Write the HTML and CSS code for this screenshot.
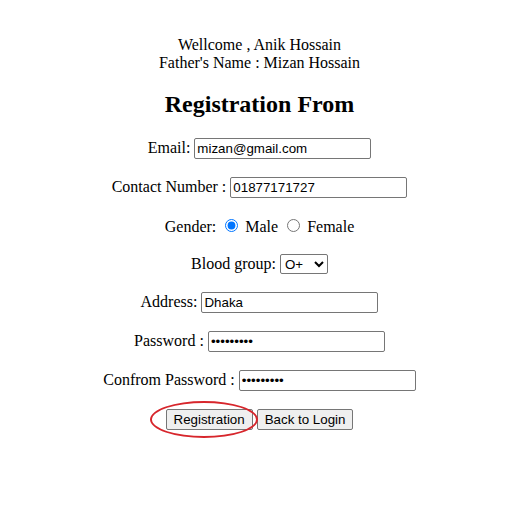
FILE: index.html
```html
<!DOCTYPE html>
<html>
<head>
<meta charset="utf-8">
<link rel="stylesheet" href="styles.css">
</head>
<body>
<div class="page">
  <p class="greet">Wellcome , Anik Hossain<br>Father's Name : Mizan Hossain</p>
  <h2 class="title">Registration From</h2>
  <form class="form">
    <p class="row">Email: <input class="field" type="text" value="mizan@gmail.com"></p>
    <p class="row">Contact Number : <input class="field" type="text" value="01877171727"></p>
    <p class="row">Gender: <input class="radio" type="radio" name="g" checked> Male <input class="radio" type="radio" name="g"> Female</p>
    <p class="row">Blood group: <select class="select"><option>O+</option><option>A+</option></select></p>
    <p class="row">Address: <input class="field" type="text" value="Dhaka"></p>
    <p class="row">Password : <input class="field" type="password" value="123456789"></p>
    <p class="row">Confrom Password : <input class="field" type="password" value="123456789"></p>
    <p class="row buttons"><span class="marked"><button class="btn" type="button">Registration</button></span> <button class="btn" type="button">Back to Login</button></p>
  </form>
</div>
</body>
</html>
```
FILE: styles.css
```css
html, body {
  margin: 0;
  background: #ffffff;
}
body {
  padding: 8px;
  font-family: "Liberation Serif", "Times New Roman", serif;
  font-size: 16px;
  color: #000;
}
.page {
  text-align: center;
  padding-top: 12px;
}
.greet {
  margin: 16px 0;
}
.title {
  font-size: 24px;
  font-weight: bold;
  margin: 19px 0 20px;
}
.form {
  margin: 0;
}
.row {
  margin: 18px 0;
}
.buttons {
  margin-top: 17px;
}
.field {
  font-family: "Liberation Sans", Arial, sans-serif;
  font-size: 13.333px;
  width: 177px;
  height: 21px;
  box-sizing: border-box;
  padding: 1px 2px;
  border: 1px solid #767676;
  border-radius: 2px;
  color: #000;
  vertical-align: baseline;
}
.radio {
  margin: 3px 3px 0 5px;
  accent-color: #0075ff;
}
.select {
  font-family: "Liberation Sans", Arial, sans-serif;
  font-size: 13.333px;
  width: 48px;
  height: 20px;
  border: 1px solid #767676;
  border-radius: 2px;
  background: #fff;
  color: #000;
}
.btn {
  font-family: "Liberation Sans", Arial, sans-serif;
  font-size: 13.333px;
  height: 21px;
  padding: 1px 7px;
  border: 1px solid #767676;
  border-radius: 2px;
  background: #efefef;
  color: #000;
}
.marked {
  position: relative;
  display: inline-block;
}
.marked::after {
  content: "";
  position: absolute;
  left: -16px;
  top: -8px;
  width: 104px;
  height: 33px;
  border: 2px solid #d7262c;
  border-radius: 50%;
  pointer-events: none;
}
```
